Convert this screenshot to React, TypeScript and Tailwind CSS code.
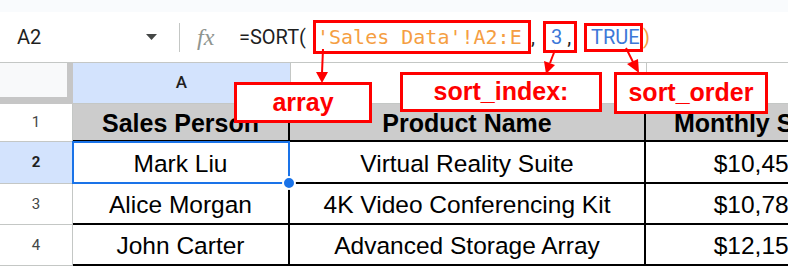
import React from "react";

const ui = "font-['Roboto','Liberation_Sans',sans-serif]";
const arial = "font-['Liberation_Sans','Arial',sans-serif]";

const rows = [
  { n: "1", cells: ["Sales Person", "Product Name", "Monthly Sales"], head: true },
  { n: "2", cells: ["Mark Liu", "Virtual Reality Suite", "$10,450"], selected: true },
  { n: "3", cells: ["Alice Morgan", "4K Video Conferencing Kit", "$10,780"] },
  { n: "4", cells: ["John Carter", "Advanced Storage Array", "$12,150"] },
];

const heights = ["h-[38px]", "h-[42px]", "h-[41px]", "h-[41px]"];

function Label({ text, className }: { text: string; className: string }) {
  return (
    <div
      className={`absolute z-20 flex items-center justify-center border-[3px] border-[#ff0000] bg-white text-[25px] font-bold text-[#ff0000] ${arial} ${className}`}
    >
      {text}
    </div>
  );
}

export default function App() {
  return (
    <div className="relative h-[267px] w-[788px] overflow-hidden bg-white">
      {/* top strip */}
      <div className="h-[12px] bg-[#f9fbfd]" />

      {/* formula bar */}
      <div className={`flex h-[51px] items-center border-b border-[#c4c7c5] ${ui}`}>
        <div className="flex w-[179px] items-center justify-between pl-[17px] pr-[22px]">
          <span className="text-[20px] text-[#1f1f1f]">A2</span>
          <svg width="11" height="6" viewBox="0 0 11 6">
            <path d="M0 0h11L5.5 6z" fill="#444746" />
          </svg>
        </div>
        <div className="h-[29px] w-px bg-[#c4c7c5]" />
        <span className="ml-[17px] w-[26px] font-['Liberation_Serif',serif] text-[24px] italic leading-none text-[#8f9590]">
          fx
        </span>
        <div className="ml-[16px] flex items-center text-[20px] text-[#1f1f1f]">
          <span className="w-[74px]">=SORT(</span>
          <div className="flex h-[34px] w-[218px] items-center border-[3px] border-[#ff0000] pl-[1px] font-['DejaVu_Sans_Mono',monospace] text-[20px] text-[#f59e42]">
            'Sales Data'!A2:E
          </div>
          <span className="w-[12px]">,</span>
          <div className="flex h-[32px] w-[34px] items-center border-[3px] border-[#ff0000] pl-[5px]">
            <span className="text-[#3c78d8]">3</span>
            <span className="ml-[5px]">,</span>
          </div>
          <div className="ml-[7px] flex h-[29px] w-[59px] items-center border-[3px] border-[#ff0000] pl-[4px] text-[#3c78d8]">
            TRUE
          </div>
          <span className="text-[#f59e42]">)</span>
        </div>
      </div>

      {/* grid */}
      <div className="grid grid-cols-[73px_217px_356px_226px]">
        {/* column headers */}
        <div className="h-[41px] border-b-[7px] border-r-[6px] border-[#c6c6c6] bg-[#f8f9fa]" />
        <div className={`flex h-[41px] items-center justify-center border-b border-[#c4c7c5] bg-[#d3e3fd] text-[17px] font-medium text-[#1f1f1f] ${ui}`}>
          A
        </div>
        <div className="h-[41px] border-b border-l border-[#c4c7c5]" />
        <div className="h-[41px] border-b border-l border-[#c4c7c5]" />

        {rows.map((r, i) => (
          <React.Fragment key={r.n}>
            <div
              className={`flex ${heights[i]} items-center justify-center border-b border-r border-[#c4c7c5] text-[15px] ${ui} ${
                r.selected ? "bg-[#d3e3fd] font-bold text-[#1f1f1f]" : "text-[#444746]"
              }`}
            >
              {r.n}
            </div>
            {r.cells.map((c, j) => (
              <div
                key={j}
                className={`relative flex ${heights[i]} items-center justify-center whitespace-nowrap border-b-2 border-r-2 border-black pt-[4px] text-black ${arial} ${
                  r.head ? "bg-[#cccccc] text-[25px] font-bold" : "text-[24.5px]"
                }`}
              >
                {c}
                {r.selected && j === 0 && (
                  <>
                    <div className="absolute -bottom-[2px] -left-px -right-[2px] -top-px border-2 border-[#1a73e8]" />
                    <div className="absolute -bottom-[8px] -right-[8px] z-10 h-[14px] w-[14px] rounded-full border-2 border-white bg-[#1a73e8]" />
                  </>
                )}
              </div>
            ))}
          </React.Fragment>
        ))}
      </div>

      {/* annotation arrows */}
      <svg className="absolute left-0 top-0 z-20" width="788" height="267">
        <g stroke="#ff0000" strokeWidth="2" fill="#ff0000">
          <line x1="323" y1="49" x2="322" y2="73" />
          <path d="M316 72 L328 72 L322 83 Z" stroke="none" />
          <line x1="555" y1="50" x2="550" y2="63" />
          <path d="M544 61 L555 65 L546 74 Z" stroke="none" />
          <line x1="626" y1="48" x2="633" y2="62" />
          <path d="M627 64 L638 59 L639 73 Z" stroke="none" />
        </g>
      </svg>

      <Label text="array" className="left-[234px] top-[82px] h-[41px] w-[138px]" />
      <Label text="sort_index:" className="left-[400px] top-[72px] h-[40px] w-[202px]" />
      <Label text="sort_order" className="left-[614px] top-[72px] h-[42px] w-[154px]" />
    </div>
  );
}
